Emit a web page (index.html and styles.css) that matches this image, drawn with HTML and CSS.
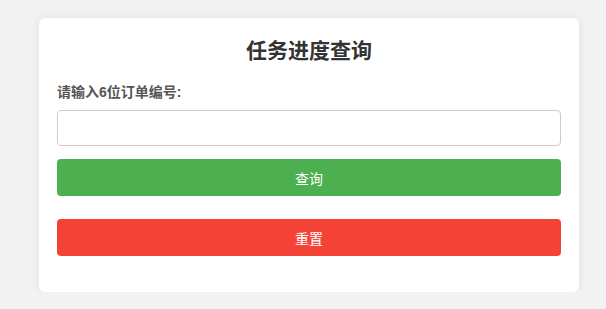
FILE: index.html
```html
<!DOCTYPE html>
<html lang="zh-CN">
<head>
<meta charset="utf-8">
<title>任务进度查询</title>
<link rel="stylesheet" href="styles.css">
</head>
<body>
<div class="card">
  <h2 class="title">任务进度查询</h2>
  <label class="label" for="order">请输入6位订单编号:</label>
  <input class="input" id="order" type="text">
  <button class="btn btn-query">查询</button>
  <button class="btn btn-reset">重置</button>
</div>
</body>
</html>
```

FILE: styles.css
```css
html, body {
  margin: 0;
  padding: 0;
  background: #f2f2f2;
  font-family: Arial, "Liberation Sans", "Noto Sans CJK SC", sans-serif;
}
body {
  padding: 18px 0 0 39px;
}
.card {
  width: 504px;
  padding: 18px 18px 36px;
  background: #fff;
  border-radius: 6px;
  box-shadow: 0 0 10px rgba(0, 0, 0, 0.08);
  display: flex;
  flex-direction: column;
}
.title {
  margin: 0 0 16px;
  font-size: 21px;
  line-height: 30px;
  font-weight: bold;
  text-align: center;
  color: #333;
}
.label {
  font-size: 14px;
  line-height: 20px;
  font-weight: bold;
  color: #555;
  margin-bottom: 8px;
}
.input {
  box-sizing: border-box;
  width: 100%;
  height: 36px;
  margin: 0 0 13px;
  padding: 0 10px;
  border: 1px solid #ccc;
  border-radius: 4px;
  font-size: 14px;
  background: #fff;
}
.btn {
  box-sizing: border-box;
  width: 100%;
  height: 37px;
  border: none;
  border-radius: 4px;
  color: #fff;
  font-size: 14px;
  font-family: Arial, "Liberation Sans", "Noto Sans CJK SC", sans-serif;
  padding: 0;
}
.btn-query {
  background: #4caf50;
  margin-bottom: 23px;
}
.btn-reset {
  background: #f44336;
}
```
